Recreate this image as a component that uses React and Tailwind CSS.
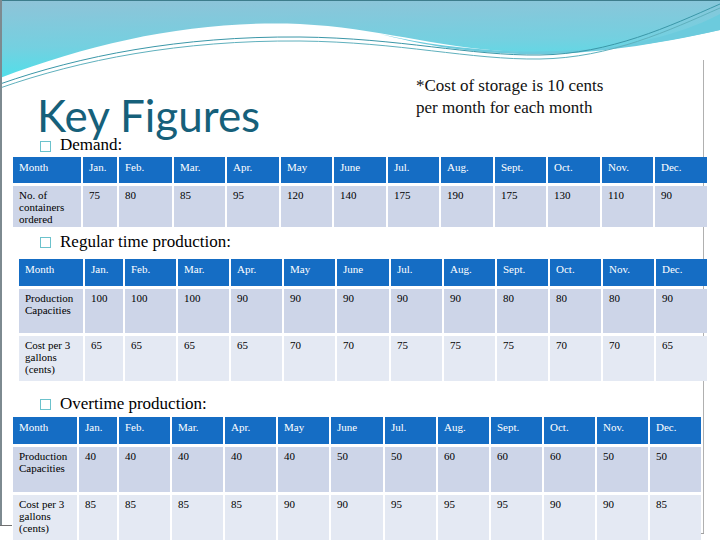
import React from 'react';

const months = ['Jan.', 'Feb.', 'Mar.', 'Apr.', 'May', 'June', 'Jul.', 'Aug.', 'Sept.', 'Oct.', 'Nov.', 'Dec.'];

const demand = {
  cols: 'grid-cols-[68px_34px_53px_51px_52px_51px_52px_51px_52px_51px_52px_51px_52px]',
  heights: ['h-[26px]', 'h-[41px]'],
  rows: [
    { label: 'No. of containers ordered', values: [75, 80, 85, 95, 120, 140, 175, 190, 175, 130, 110, 90] },
  ],
};

const regular = {
  cols: 'grid-cols-[64px_38px_51px_51px_51px_51px_52px_51px_51px_51px_51px_51px_51px]',
  heights: ['h-[27px]', 'h-[44px]', 'h-[45px]'],
  rows: [
    { label: 'Production Capacities', values: [100, 100, 100, 90, 90, 90, 90, 90, 80, 80, 80, 90] },
    { label: 'Cost per 3 gallons (cents)', values: [65, 65, 65, 65, 70, 70, 75, 75, 75, 70, 70, 65] },
  ],
};

const overtime = {
  cols: 'grid-cols-[64px_38px_51px_51px_51px_51px_52px_51px_51px_51px_51px_51px_51px]',
  heights: ['h-[27px]', 'h-[45px]', 'h-[45px]'],
  rows: [
    { label: 'Production Capacities', values: [40, 40, 40, 40, 40, 50, 50, 60, 60, 60, 50, 50] },
    { label: 'Cost per 3 gallons (cents)', values: [85, 85, 85, 85, 90, 90, 95, 95, 95, 90, 90, 85] },
  ],
};

const rowBg = ['bg-[#cdd5e8]', 'bg-[#e4e9f3]'];

function Table({ data, className }) {
  return (
    <div className={`grid ${data.cols} gap-x-[2px] gap-y-[3px] text-[11px] leading-[12px] ${className}`}>
      {['Month', ...months].map((m) => (
        <div key={m} className={`${data.heights[0]} bg-[#156dc4] text-white pl-[6px] pt-[4px]`}>{m}</div>
      ))}
      {data.rows.map((r, i) => (
        <React.Fragment key={r.label}>
          <div className={`${data.heights[i + 1]} ${rowBg[i]} text-black pl-[6px] pt-[3px] pr-[4px]`}>{r.label}</div>
          {r.values.map((v, j) => (
            <div key={j} className={`${data.heights[i + 1]} ${rowBg[i]} text-black pl-[6px] pt-[3px]`}>{v}</div>
          ))}
        </React.Fragment>
      ))}
    </div>
  );
}

function Bullet({ children, className, box }) {
  return (
    <div className={`flex items-start pl-[40px] ${className}`}>
      <div className={`w-[11px] h-[11px] border border-[#6cc2cc] bg-white ${box}`} />
      <div className="ml-[9px] text-[17px] leading-[16px] text-black">{children}</div>
    </div>
  );
}

function Backdrop() {
  return (
    <svg className="absolute inset-0" width="720" height="540" viewBox="0 0 720 540">
      <defs>
        <linearGradient id="sky" x1="0" y1="0" x2="0.15" y2="1">
          <stop offset="0" stopColor="#8fc3d8" />
          <stop offset="0.6" stopColor="#74d0e0" />
          <stop offset="1" stopColor="#4fe0ea" />
        </linearGradient>
      </defs>
      <path d="M0 0 H720 V30 C650 46 580 54 520 52 C440 49 380 28 300 24 C200 20 100 40 0 78 Z" fill="url(#sky)" />
      <path d="M380 34 C450 50 520 54 580 50 C640 46 690 30 720 14 V30 C650 46 580 56 520 54 C460 52 420 44 380 34 Z" fill="#6ccbdd" />
      <path d="M0 84 C80 56 180 36 300 37 C400 38 470 56 540 55 C610 54 670 26 720 4" fill="none" stroke="#3b97a8" strokeWidth="1" />
      <path d="M0 88 C80 60 180 40 300 41 C400 42 470 60 540 59 C610 58 670 30 720 8" fill="none" stroke="#5fb0bd" strokeWidth="1" />
      <rect x="0" y="0" width="720" height="1" fill="#3d7d8c" />
      <rect x="0" y="0" width="2" height="525" fill="#7d8a90" />
      <rect x="0" y="525" width="12" height="1" fill="#707070" />
      <rect x="703" y="60" width="1" height="474" fill="#b0b0b0" />
      <rect x="690" y="533" width="14" height="1" fill="#a0a0a0" />
    </svg>
  );
}

export default function App() {
  return (
    <div className="relative w-[720px] h-[540px] overflow-hidden bg-white font-['Liberation_Serif',serif]">
      <Backdrop />
      <div className="relative flex flex-col">
        <div className="flex h-[137px]">
          <div className="w-[416px] pl-[37px] pt-[93px]">
            <h1 className="font-['Lato',sans-serif] text-[44px] leading-[44px] text-[#16607a]">Key Figures</h1>
          </div>
          <div className="pt-[75px] text-[17px] leading-[22px] text-[#111]">
            <div>*Cost of storage is 10 cents</div>
            <div>per month for each month</div>
          </div>
        </div>
        <Bullet className="h-[20px]" box="mt-[4px]">Demand:</Bullet>
        <Table data={demand} className="ml-[13px]" />
        <Bullet className="h-[32px] pt-[7px]" box="mt-[3px]">Regular time production:</Bullet>
        <Table data={regular} className="ml-[19px]" />
        <Bullet className="h-[36px] pt-[15px]" box="mt-[3px]">Overtime production:</Bullet>
        <Table data={overtime} className="ml-[13px]" />
      </div>
    </div>
  );
}
